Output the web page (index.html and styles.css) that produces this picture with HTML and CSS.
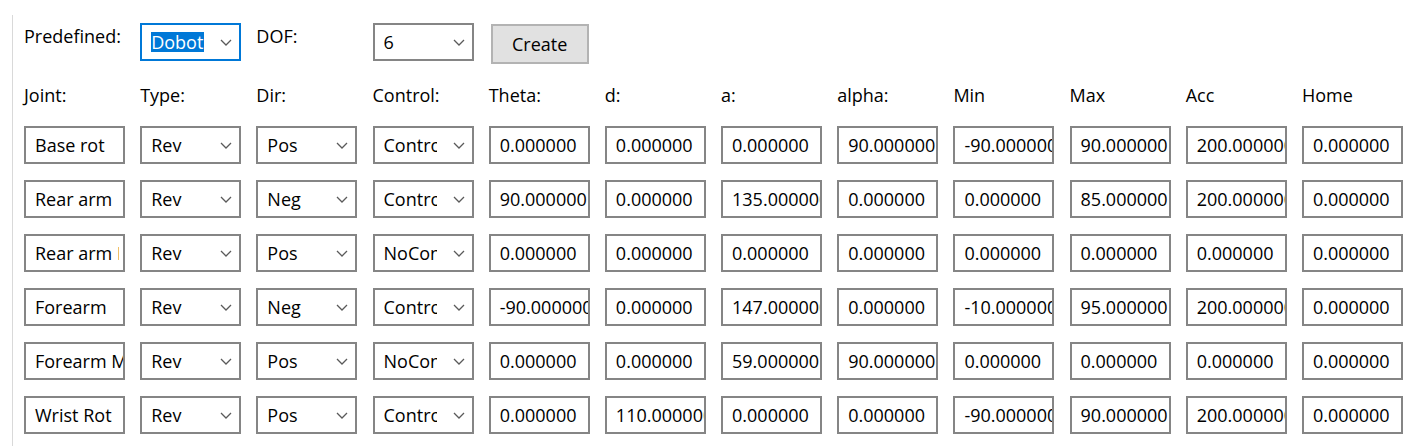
FILE: index.html
```html
<!DOCTYPE html>
<html>
<head>
<meta charset="utf-8">
<link rel="stylesheet" href="styles.css">
</head>
<body>
<div class="panel">
  <div class="grid top">
    <div class="label">Predefined:</div>
    <div class="combo focused"><span class="val"><span class="sel">Dobot</span></span><svg class="chev" viewBox="0 0 12 7"><polyline points="1,1 6,6 11,1"/></svg></div>
    <div class="label">DOF:</div>
    <div class="combo"><span class="val">6</span><svg class="chev" viewBox="0 0 12 7"><polyline points="1,1 6,6 11,1"/></svg></div>
    <button class="btn">Create</button>
  </div>

  <div class="grid head">
    <div class="label">Joint:</div>
    <div class="label">Type:</div>
    <div class="label">Dir:</div>
    <div class="label">Control:</div>
    <div class="label">Theta:</div>
    <div class="label">d:</div>
    <div class="label">a:</div>
    <div class="label">alpha:</div>
    <div class="label">Min</div>
    <div class="label">Max</div>
    <div class="label">Acc</div>
    <div class="label">Home</div>
  </div>

  <div class="grid rows">
    <div class="field">Base rot</div>
    <div class="combo"><span class="val">Rev</span><svg class="chev" viewBox="0 0 12 7"><polyline points="1,1 6,6 11,1"/></svg></div>
    <div class="combo"><span class="val">Pos</span><svg class="chev" viewBox="0 0 12 7"><polyline points="1,1 6,6 11,1"/></svg></div>
    <div class="combo"><span class="val">Control</span><svg class="chev" viewBox="0 0 12 7"><polyline points="1,1 6,6 11,1"/></svg></div>
    <div class="field">0.000000</div>
    <div class="field">0.000000</div>
    <div class="field">0.000000</div>
    <div class="field">90.000000</div>
    <div class="field">-90.000000</div>
    <div class="field">90.000000</div>
    <div class="field">200.000000</div>
    <div class="field">0.000000</div>

    <div class="field">Rear arm</div>
    <div class="combo"><span class="val">Rev</span><svg class="chev" viewBox="0 0 12 7"><polyline points="1,1 6,6 11,1"/></svg></div>
    <div class="combo"><span class="val">Neg</span><svg class="chev" viewBox="0 0 12 7"><polyline points="1,1 6,6 11,1"/></svg></div>
    <div class="combo"><span class="val">Control</span><svg class="chev" viewBox="0 0 12 7"><polyline points="1,1 6,6 11,1"/></svg></div>
    <div class="field">90.000000</div>
    <div class="field">0.000000</div>
    <div class="field">135.000000</div>
    <div class="field">0.000000</div>
    <div class="field">0.000000</div>
    <div class="field">85.000000</div>
    <div class="field">200.000000</div>
    <div class="field">0.000000</div>

    <div class="field"><span class="clip">Rear arm Motor</span></div>
    <div class="combo"><span class="val">Rev</span><svg class="chev" viewBox="0 0 12 7"><polyline points="1,1 6,6 11,1"/></svg></div>
    <div class="combo"><span class="val">Pos</span><svg class="chev" viewBox="0 0 12 7"><polyline points="1,1 6,6 11,1"/></svg></div>
    <div class="combo"><span class="val">NoControl</span><svg class="chev" viewBox="0 0 12 7"><polyline points="1,1 6,6 11,1"/></svg></div>
    <div class="field">0.000000</div>
    <div class="field">0.000000</div>
    <div class="field">0.000000</div>
    <div class="field">0.000000</div>
    <div class="field">0.000000</div>
    <div class="field">0.000000</div>
    <div class="field">0.000000</div>
    <div class="field">0.000000</div>

    <div class="field">Forearm</div>
    <div class="combo"><span class="val">Rev</span><svg class="chev" viewBox="0 0 12 7"><polyline points="1,1 6,6 11,1"/></svg></div>
    <div class="combo"><span class="val">Neg</span><svg class="chev" viewBox="0 0 12 7"><polyline points="1,1 6,6 11,1"/></svg></div>
    <div class="combo"><span class="val">Control</span><svg class="chev" viewBox="0 0 12 7"><polyline points="1,1 6,6 11,1"/></svg></div>
    <div class="field">-90.000000</div>
    <div class="field">0.000000</div>
    <div class="field">147.000000</div>
    <div class="field">0.000000</div>
    <div class="field">-10.000000</div>
    <div class="field">95.000000</div>
    <div class="field">200.000000</div>
    <div class="field">0.000000</div>

    <div class="field">Forearm Motor</div>
    <div class="combo"><span class="val">Rev</span><svg class="chev" viewBox="0 0 12 7"><polyline points="1,1 6,6 11,1"/></svg></div>
    <div class="combo"><span class="val">Pos</span><svg class="chev" viewBox="0 0 12 7"><polyline points="1,1 6,6 11,1"/></svg></div>
    <div class="combo"><span class="val">NoControl</span><svg class="chev" viewBox="0 0 12 7"><polyline points="1,1 6,6 11,1"/></svg></div>
    <div class="field">0.000000</div>
    <div class="field">0.000000</div>
    <div class="field">59.000000</div>
    <div class="field">90.000000</div>
    <div class="field">0.000000</div>
    <div class="field">0.000000</div>
    <div class="field">0.000000</div>
    <div class="field">0.000000</div>

    <div class="field">Wrist Rot</div>
    <div class="combo"><span class="val">Rev</span><svg class="chev" viewBox="0 0 12 7"><polyline points="1,1 6,6 11,1"/></svg></div>
    <div class="combo"><span class="val">Pos</span><svg class="chev" viewBox="0 0 12 7"><polyline points="1,1 6,6 11,1"/></svg></div>
    <div class="combo"><span class="val">Control</span><svg class="chev" viewBox="0 0 12 7"><polyline points="1,1 6,6 11,1"/></svg></div>
    <div class="field">0.000000</div>
    <div class="field">110.000000</div>
    <div class="field">0.000000</div>
    <div class="field">0.000000</div>
    <div class="field">-90.000000</div>
    <div class="field">90.000000</div>
    <div class="field">200.000000</div>
    <div class="field">0.000000</div>
  </div>
</div>
</body>
</html>
```

FILE: styles.css
```css
html, body {
  margin: 0;
  padding: 0;
  background: #ffffff;
}

body {
  font-family: "Open Sans", "Noto Sans", "Liberation Sans", sans-serif;
  font-size: 18px;
  line-height: 24px;
  color: #000000;
  overflow: hidden;
}

.panel {
  margin: 15px 0 0 12px;
  height: calc(100vh - 15px);
  border-left: 1px solid #d9d9d9;
  padding: 8px 0 0 11px;
  box-sizing: border-box;
}

.grid {
  display: grid;
  grid-template-columns: repeat(12, 101px);
  column-gap: 15.18px;
}

.top {
  align-items: start;
  height: 41px;
}

.top .label {
  margin-top: 1px;
}

.head {
  margin-top: 19px;
}

.rows {
  margin-top: 19px;
  grid-auto-rows: 38px;
  row-gap: 16px;
}

.label {
  white-space: nowrap;
}

.field,
.combo {
  height: 38px;
  box-sizing: border-box;
  border: 2px solid #858585;
  background: #ffffff;
  display: flex;
  align-items: center;
  overflow: hidden;
  white-space: nowrap;
}

.field {
  padding-left: 9px;
}

.clip {
  display: block;
  max-width: 84px;
  overflow: hidden;
}

.combo {
  padding: 0 7px 0 9px;
}

.combo.focused {
  border-color: #0078d7;
}

.val {
  flex: 1;
  min-width: 0;
  overflow: hidden;
  margin-right: 16px;
}

.sel {
  background: #0078d7;
  color: #ffffff;
  display: inline-block;
  line-height: 20px;
  padding: 0 1px 0 0;
}

.chev {
  width: 12px;
  height: 7px;
  flex: none;
  fill: none;
  stroke: #5a5a5a;
  stroke-width: 1.3;
}

.btn {
  grid-column: 5;
  margin: 1px 0 0 2px;
  width: 98px;
  height: 40px;
  box-sizing: border-box;
  border: 2px solid #b3b3b3;
  background: #e1e1e1;
  font-family: inherit;
  font-size: 18px;
  color: #000000;
  padding: 0;
}
```
